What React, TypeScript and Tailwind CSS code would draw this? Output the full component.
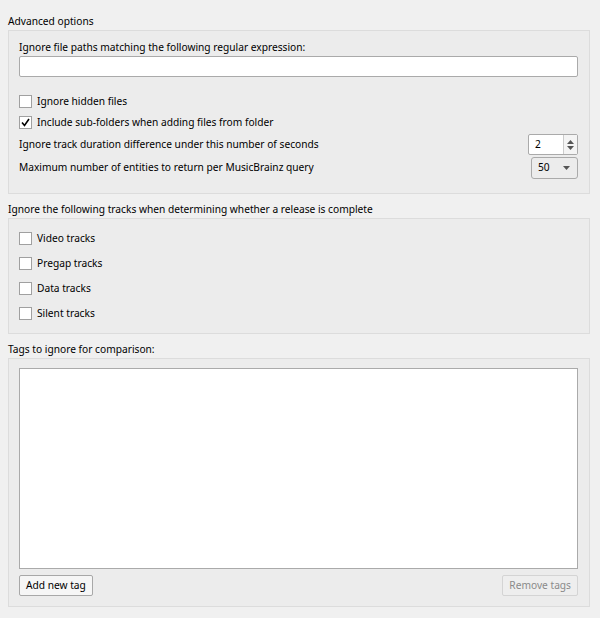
import React from "react";

const Box = ({ checked }: { checked?: boolean }) => (
  <span className="w-[13px] h-[13px] border border-[#a0a0a0] bg-white flex items-center justify-center shrink-0">
    {checked && (
      <svg width="9" height="9" viewBox="0 0 9 9"><path d="M1 4.5 L3.5 7.5 L8 1" stroke="#000" strokeWidth="1.6" fill="none" /></svg>
    )}
  </span>
);

const Check = ({ label, checked }: { label: string; checked?: boolean }) => (
  <div className="flex items-center gap-[5px] h-[25px]">
    <Box checked={checked} />
    <span>{label}</span>
  </div>
);

export default function App() {
  return (
    <div className="w-[600px] h-[618px] bg-[#f0f0f0] text-[10.2px] text-black px-[8px] pt-[13px] overflow-hidden" style={{ fontFamily: '"Noto Sans", sans-serif' }}>
      <div className="h-[17px] leading-[17px]">Advanced options</div>
      <div className="h-[164px] border border-[#dcdcdc] bg-[#ececec] mr-[2px] pl-[10px] pr-[11px] pt-[8px]">
        <div className="h-[17px] leading-[17px]">Ignore file paths matching the following regular expression:</div>
        <div className="h-[21px] border border-[#aaaaaa] rounded-[2px] bg-white" />
        <div className="mt-[14px]">
          <div className="h-[21px] flex items-center gap-[5px]"><Box /><span>Ignore hidden files</span></div>
          <div className="h-[21px] flex items-center gap-[5px]"><Box checked /><span>Include sub-folders when adding files from folder</span></div>
        </div>
        <div className="flex items-center justify-between h-[21px] mt-[1px]">
          <span>Ignore track duration difference under this number of seconds</span>
          <div className="w-[50px] h-[21px] border border-[#aaaaaa] rounded-[2px] bg-white flex">
            <span className="flex-1 pl-[6px] leading-[19px]">2</span>
            <div className="w-[14px] border-l border-[#cccccc] bg-[#f4f4f4] flex flex-col items-center justify-center gap-[2px]">
              <svg width="7" height="4" viewBox="0 0 7 4"><path d="M0 4 L3.5 0 L7 4Z" fill="#555" /></svg>
              <svg width="7" height="4" viewBox="0 0 7 4"><path d="M0 0 L3.5 4 L7 0Z" fill="#555" /></svg>
            </div>
          </div>
        </div>
        <div className="flex items-center justify-between h-[22px] mt-[2px]">
          <span>Maximum number of entities to return per MusicBrainz query</span>
          <div className="w-[47px] h-[22px] border border-[#aaaaaa] rounded-[3px] bg-[#ececec] flex items-center pl-[6px] pr-[7px] justify-between">
            <span>50</span>
            <svg width="7" height="4" viewBox="0 0 7 4"><path d="M0 0 L3.5 4 L7 0Z" fill="#555" /></svg>
          </div>
        </div>
      </div>
      <div className="h-[17px] leading-[17px] mt-[7px]">Ignore the following tracks when determining whether a release is complete</div>
      <div className="h-[116px] border border-[#dcdcdc] bg-[#ececec] mr-[2px] px-[10px] pt-[7px]">
        <Check label="Video tracks" />
        <Check label="Pregap tracks" />
        <Check label="Data tracks" />
        <Check label="Silent tracks" />
      </div>
      <div className="h-[17px] leading-[17px] mt-[7px]">Tags to ignore for comparison:</div>
      <div className="h-[249px] border border-[#dcdcdc] bg-[#ececec] mr-[2px] pl-[10px] pr-[11px] pt-[9px]">
        <div className="h-[201px] border border-[#aaaaaa] bg-white" />
        <div className="flex justify-between mt-[6px]">
          <div className="h-[21px] px-[6px] border border-[#a8a8a8] rounded-[2px] bg-[#f6f6f6] leading-[19px]">Add new tag</div>
          <div className="h-[21px] px-[6px] border border-[#d4d4d4] rounded-[2px] bg-[#eeeeee] text-[#8a8a8a] leading-[19px]">Remove tags</div>
        </div>
      </div>
    </div>
  );
}
